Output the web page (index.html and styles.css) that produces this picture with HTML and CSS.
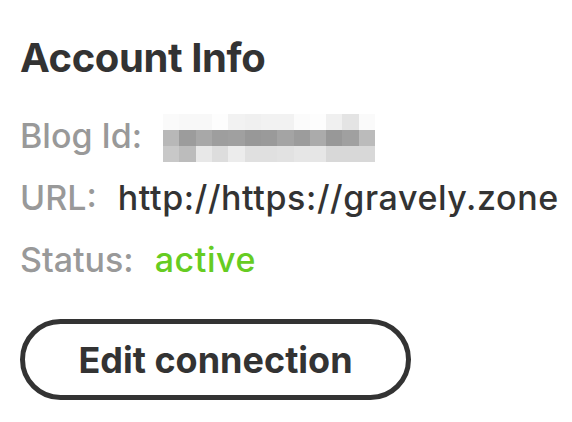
FILE: index.html
```html
<!DOCTYPE html>
<html lang="en">
<head>
<meta charset="utf-8">
<title>Account Info</title>
<link rel="stylesheet" href="styles.css">
</head>
<body>
<section class="account">
  <h2 class="title">Account Info</h2>
  <dl class="info">
    <div class="row">
      <dt class="label">Blog Id:</dt>
      <dd class="value">
        <span class="mosaic" aria-label="hidden blog id">
          <i class="g250"></i><i class="g248"></i><i class="g248"></i><i class="g253"></i><i class="g242"></i><i class="g240"></i><i class="g242"></i><i class="g242"></i><i class="g251"></i><i class="g253"></i><i class="g240"></i><i class="g228"></i><i class="g250"></i>
          <i class="g184"></i><i class="g156"></i><i class="g168"></i><i class="g158"></i><i class="g160"></i><i class="g152"></i><i class="g154"></i><i class="g164"></i><i class="g156"></i><i class="g171"></i><i class="g152"></i><i class="g160"></i><i class="g187"></i>
          <i class="g200"></i><i class="g188"></i><i class="g232"></i><i class="g221"></i><i class="g236"></i><i class="g224"></i><i class="g224"></i><i class="g226"></i><i class="g230"></i><i class="g230"></i><i class="g216"></i><i class="g216"></i><i class="g216"></i>
        </span>
      </dd>
    </div>
    <div class="row">
      <dt class="label">URL:</dt>
      <dd class="value">http://https://gravely.zone</dd>
    </div>
    <div class="row">
      <dt class="label">Status:</dt>
      <dd class="value status">active</dd>
    </div>
  </dl>
  <button class="edit" type="button">Edit connection</button>
</section>
</body>
</html>
```

FILE: styles.css
```css
html, body {
  margin: 0;
  padding: 0;
  background: #ffffff;
}

body {
  font-family: "Inter", "Lato", "Liberation Sans", sans-serif;
  color: #333333;
}

.account {
  display: flex;
  flex-direction: column;
  align-items: flex-start;
  padding: 34px 20px 0 20px;
}

.title {
  margin: 0;
  font-size: 40px;
  font-weight: 700;
  line-height: 48px;
  color: #333333;
  letter-spacing: -0.4px;
}

.info {
  margin: 30px 0 0 0;
  display: flex;
  flex-direction: column;
  gap: 14px;
}

.row {
  display: flex;
  align-items: center;
  gap: 21px;
  height: 48px;
  line-height: 48px;
}

.label {
  margin: 0;
  font-size: 34px;
  font-weight: 500;
  letter-spacing: 0;
  color: #999999;
}

.value {
  margin: 0;
  font-size: 34px;
  font-weight: 500;
  letter-spacing: 0.6px;
  color: #333333;
}

.status {
  color: #66cc22;
}

.mosaic {
  display: grid;
  grid-template-columns: repeat(13, 16.3px);
  grid-auto-rows: 16.3px;
  margin-top: 4px;
}

.mosaic i { display: block; }
.g250 { background: #fafafa; }
.g248 { background: #f8f8f8; }
.g253 { background: #fdfdfd; }
.g242 { background: #f2f2f2; }
.g240 { background: #f0f0f0; }
.g251 { background: #fbfbfb; }
.g228 { background: #e4e4e4; }
.g184 { background: #b8b8b8; }
.g156 { background: #9c9c9c; }
.g168 { background: #a8a8a8; }
.g158 { background: #9e9e9e; }
.g160 { background: #a0a0a0; }
.g152 { background: #989898; }
.g154 { background: #9a9a9a; }
.g164 { background: #a4a4a4; }
.g171 { background: #ababab; }
.g187 { background: #bbbbbb; }
.g200 { background: #c8c8c8; }
.g188 { background: #bcbcbc; }
.g232 { background: #e8e8e8; }
.g221 { background: #dddddd; }
.g236 { background: #ececec; }
.g224 { background: #e0e0e0; }
.g226 { background: #e2e2e2; }
.g230 { background: #e6e6e6; }
.g216 { background: #d8d8d8; }

.edit {
  margin-top: 35px;
  width: 391px;
  height: 81px;
  border: 5px solid #333333;
  border-radius: 999px;
  background: #ffffff;
  font-family: inherit;
  font-size: 36px;
  font-weight: 700;
  color: #333333;
  padding: 0;
}
```
